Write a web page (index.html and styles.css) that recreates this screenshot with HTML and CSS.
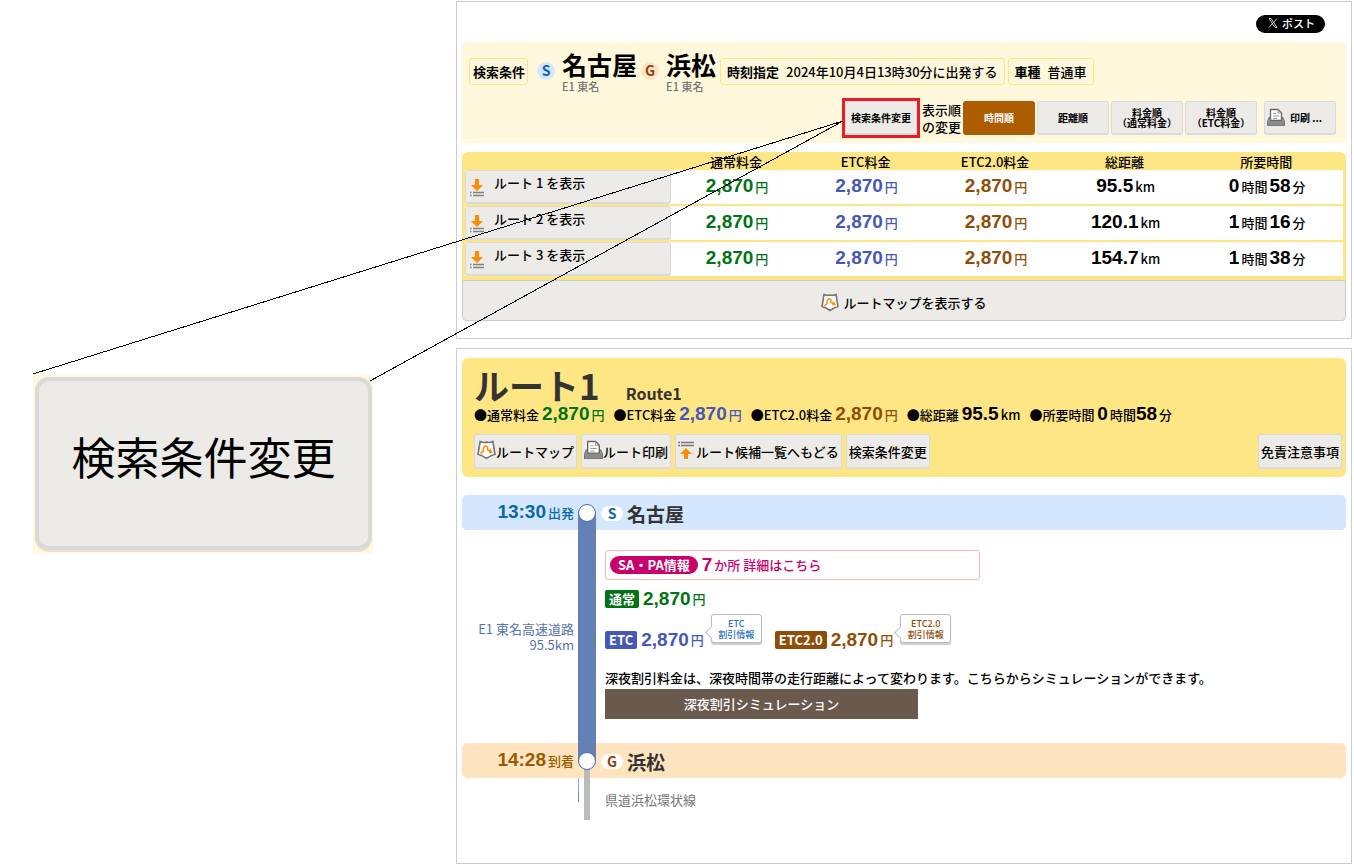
FILE: index.html
```html
<!DOCTYPE html>
<html lang="ja">
<head>
<meta charset="utf-8">
<title>ルート検索結果</title>
<link rel="stylesheet" href="styles.css">
</head>
<body>
<svg class="defs" aria-hidden="true">
  <symbol id="i-down" viewBox="0 0 14 18">
    <path d="M5 0h4v6h4L7 12 1 6h4z" fill="#ff8c00"/>
    <path d="M0 13.5h1.5M3 13.5h11M0 16.5h1.5M3 16.5h11" stroke="#808080" stroke-width="1.6"/>
  </symbol>
  <symbol id="i-up" viewBox="0 0 16 18">
    <path d="M0 1.5h2M3 1.5h13M0 4.500h2M3 4.500h13" stroke="#777" stroke-width="1.6"/>
    <path d="M6 18h4v-5h4L8 7l-6 6h4z" fill="#ff8c00"/>
  </symbol>
  <symbol id="i-map" viewBox="0 0 18 18">
    <path d="M3 1q3 1.500 6 .5 3 1 6-.5l2 12q-4 1-8 4-4-3-8-4z" fill="#fff" stroke="#777" stroke-width="1.6"/>
    <path d="M4 13q-.5-2 2-2.500V7q2-3 4-1v3l3 1" fill="none" stroke="#ff8c00" stroke-width="1.4"/>
    <path d="M12.500 7.500L15 11.500l-4 .5z" fill="#ff8c00"/>
  </symbol>
  <symbol id="i-print" viewBox="0 0 18 18">
    <path d="M2 9h14l1.500 4v4H.5v-4z" fill="#999" stroke="#707070"/>
    <path d="M3.500 1H11l3.500 3.500V12h-11z" fill="#fff" stroke="#666" stroke-width="1.3"/>
    <path d="M11 1v3.500h3.500M6 5h3M6 7.500h6M6 10h4" fill="none" stroke="#999"/>
    <path d="M1 13h16v4H1z" fill="#8a8a8a"/>
  </symbol>
</svg>

<main class="page">
  <aside class="callout"><button class="callout-btn" type="button">検索条件変更</button></aside>

  <div class="results">
    <section class="panel">
      <div class="share">
        <button class="post" type="button"><svg width="10" height="10" viewBox="0 0 10 10"><path d="M1 .5h2l6 9H7zM9 .5L1 9.500" fill="none" stroke="#ccc"/></svg>ポスト</button>
      </div>

      <div class="search">
        <div class="conditions">
          <span class="chip chip-label">検索条件</span>
          <span class="dot dot-s">S</span>
          <div class="place"><strong>名古屋</strong><small>E1 東名</small></div>
          <span class="dot dot-g">G</span>
          <div class="place"><strong>浜松</strong><small>E1 東名</small></div>
          <span class="chip chip-time"><b>時刻指定</b>2024年10月4日13時30分に出発する</span>
          <span class="chip"><b>車種</b>普通車</span>
        </div>
        <div class="sorting">
          <span class="marked"><button class="btn sort" type="button">検索条件変更</button></span>
          <span class="sort-label">表示順<br>の変更</span>
          <button class="btn sort active" type="button">時間順</button>
          <button class="btn sort" type="button">距離順</button>
          <button class="btn sort" type="button">料金順<br>（通常料金）</button>
          <button class="btn sort" type="button">料金順<br>（ETC料金）</button>
          <button class="btn sort print" type="button"><svg width="18" height="19"><use href="#i-print"/></svg>印刷 ...</button>
        </div>
      </div>

      <div class="routes">
        <table>
          <thead><tr><th class="c-name"></th><th>通常料金</th><th>ETC料金</th><th>ETC2.0料金</th><th>総距離</th><th class="c-time">所要時間</th></tr></thead>
          <tbody>
            <tr><td><button class="btn show" type="button"><svg width="14" height="18"><use href="#i-down"/></svg>ルート 1 を表示</button></td>
              <td class="green"><b>2,870</b>円</td><td class="blue"><b>2,870</b>円</td><td class="brown"><b>2,870</b>円</td><td><b>95.5</b>km</td><td><b>0</b>時間<b>58</b>分</td></tr>
            <tr><td><button class="btn show" type="button"><svg width="14" height="18"><use href="#i-down"/></svg>ルート 2 を表示</button></td>
              <td class="green"><b>2,870</b>円</td><td class="blue"><b>2,870</b>円</td><td class="brown"><b>2,870</b>円</td><td><b>120.1</b>km</td><td><b>1</b>時間<b>16</b>分</td></tr>
            <tr><td><button class="btn show" type="button"><svg width="14" height="18"><use href="#i-down"/></svg>ルート 3 を表示</button></td>
              <td class="green"><b>2,870</b>円</td><td class="blue"><b>2,870</b>円</td><td class="brown"><b>2,870</b>円</td><td><b>154.7</b>km</td><td><b>1</b>時間<b>38</b>分</td></tr>
          </tbody>
        </table>
      </div>
      <button class="open-map" type="button"><svg width="18" height="19"><use href="#i-map"/></svg>ルートマップを表示する</button>
    </section>

    <section class="panel detail">
      <header class="route-head">
        <h1>ルート1<small>Route1</small></h1>
        <ul class="stats">
          <li>●通常料金 <span class="green"><b>2,870</b>円</span></li>
          <li>●ETC料金 <span class="blue"><b>2,870</b>円</span></li>
          <li>●ETC2.0料金 <span class="brown"><b>2,870</b>円</span></li>
          <li>●総距離 <span><b>95.5</b>km</span></li>
          <li>●所要時間 <span><b>0</b>時間<b>58</b>分</span></li>
        </ul>
        <div class="actions">
          <button class="btn" type="button"><svg width="19" height="20"><use href="#i-map"/></svg>ルートマップ</button>
          <button class="btn" type="button"><svg width="19" height="20"><use href="#i-print"/></svg>ルート印刷</button>
          <button class="btn up" type="button"><svg width="16" height="18"><use href="#i-up"/></svg>ルート候補一覧へもどる</button>
          <button class="btn" type="button">検索条件変更</button>
          <button class="btn last" type="button">免責注意事項</button>
        </div>
      </header>

      <div class="timeline">
        <div class="stop depart">
          <div class="when"><b>13:30</b>出発</div>
          <div class="rail rail-start"><span class="node"></span></div>
          <h2><span class="badge">S</span>名古屋</h2>
        </div>
        <div class="leg">
          <div class="road">E1 東名高速道路<br>95.5km</div>
          <div class="rail rail-full"></div>
          <div class="leg-body">
            <a class="sapa" href="#"><span class="pill">SA・PA情報</span><b>7</b>か所 詳細はこちら</a>
            <div class="fare green"><span class="tag">通常</span><b>2,870</b>円</div>
            <div class="fares">
              <div class="fare blue"><span class="tag">ETC</span><b>2,870</b>円</div>
              <button class="bubble b-etc" type="button">ETC<br>割引情報</button>
              <div class="fare brown"><span class="tag">ETC2.0</span><b>2,870</b>円</div>
              <button class="bubble b-etc2" type="button">ETC2.0<br>割引情報</button>
            </div>
            <p class="note">深夜割引料金は、深夜時間帯の走行距離によって変わります。こちらからシミュレーションができます。</p>
            <button class="simulate" type="button">深夜割引シミュレーション</button>
          </div>
        </div>
        <div class="stop arrive">
          <div class="when"><b>14:28</b>到着</div>
          <div class="rail rail-end"><span class="node"></span></div>
          <h2><span class="badge">G</span>浜松</h2>
        </div>
        <div class="leg after">
          <div></div>
          <div class="rail rail-local"></div>
          <div class="local">県道浜松環状線</div>
        </div>
      </div>
    </section>
  </div>

  <svg class="leader" width="844" height="384" aria-hidden="true"><path d="M33 374L843 121M370 381L843 121" stroke="#000" stroke-width="1" shape-rendering="crispEdges"/></svg>
</main>
</body>
</html>
```
FILE: styles.css
```css
* { box-sizing: border-box; }
body {
  margin: 0;
  background: #fff;
  color: #000;
  font: 500 13px/18px "Noto Sans CJK JP", sans-serif;
}
button { font: inherit; color: inherit; margin: 0; padding: 0; cursor: pointer; white-space: nowrap; }
svg { flex: none; }
.defs { position: absolute; width: 0; height: 0; }

.page {
  position: relative;
  display: grid;
  grid-template-columns: 456px minmax(0, 1fr);
  min-height: 100vh;
  padding: 1px 2px 0 0;
}
.leader { position: absolute; left: 0; top: 0; pointer-events: none; }

.callout {
  align-self: start;
  margin: 374px 83px 0 33px;
  padding: 2px 1px 3px 2px;
  background: #fff8dc;
}
.callout-btn {
  display: block;
  width: 100%;
  height: 173px;
  padding-bottom: 16px;
  border: 4px solid #dadada;
  border-radius: 14px;
  background: #ecebe7;
  box-shadow: 0 2px 0 #e9e1c8;
  font-size: 44px;
  font-weight: 400;
}

.results { display: flex; flex-direction: column; gap: 9px; }
.panel { border: 1px solid #ccc; padding: 0 5px 17px; }
.detail { flex: 1; padding-top: 9px; }

.btn {
  display: flex;
  align-items: center;
  justify-content: center;
  border: 1px solid #dadada;
  border-bottom-width: 2px;
  border-radius: 3px;
  background: #ecebe7;
}
.green { color: #007314; }
.blue { color: #4557b8; }
.brown { color: #8f4d08; }

.share { display: flex; justify-content: flex-end; padding: 13px 21px 9px 0; }
.post {
  display: flex;
  align-items: center;
  gap: 4px;
  height: 18px;
  padding: 0 10px 2px 12px;
  border: 0;
  border-radius: 9px;
  background: #000;
  color: #fff;
  font-size: 11px;
}

.search { padding: 9px 10px 6px 7px; border-radius: 5px; background: #fff8dc; }
.conditions { display: flex; align-items: flex-start; height: 48px; }
.chip {
  height: 27px;
  margin-top: 7px;
  padding: 4px 6px 0;
  border: 1px solid #ffe685;
  border-radius: 3px;
  line-height: 18px;
  white-space: nowrap;
}
.chip b { margin-right: 7px; }
.chip-label { padding: 4px 2px 0 3px; font-weight: 700; }
.chip-time { margin: 7px 3px 0 4px; }
.dot {
  width: 18px;
  height: 18px;
  margin: 11px 7px 0 9px;
  border-radius: 50%;
  font-size: 14px;
  font-weight: 700;
  line-height: 17px;
  text-align: center;
}
.dot-s { background: #d4e7ff; color: #1465a5; }
.dot-g { margin-left: 4px; background: #ffe4c0; color: #8f4310; }
.place strong { display: block; font-size: 25px; line-height: 27px; }
.place small { display: block; color: #777; font-size: 11px; line-height: 16px; }
.sorting { display: flex; align-items: center; justify-content: flex-end; gap: 2px; height: 38px; }
.sort { width: 72px; height: 34px; font-size: 10px; font-weight: 700; line-height: 10px; }
.marked { border: 3px solid #ed1c24; }
.sort-label { line-height: 17px; }
.active { border-color: #ad5c00; background: #ad5c00; color: #fff; }
.print { justify-content: flex-start; gap: 5px; margin-left: 5px; padding-left: 2px; }

.routes { margin-top: 9px; padding: 0 3px 4px; border-radius: 6px 6px 0 0; background: #ffe685; }
table { width: 100%; border-spacing: 0; table-layout: fixed; text-align: center; }
th { height: 18px; padding: 1px 0 0; font-weight: 500; line-height: 17px; }
.c-name { width: 23.5%; }
.c-time { width: 17.5%; }
td { height: 36px; padding: 0; border-bottom: 2px solid #ffe685; background: #fff; line-height: 34px; white-space: nowrap; }
tbody tr:last-child td { height: 34px; border-bottom: 0; }
b { font-family: inherit; }
td b, .stats b, .fare b, .sapa b, .when b {
  margin: 0 2px;
  font: 700 19px/20px "Liberation Sans", Arial, sans-serif;
}
.show { justify-content: flex-start; gap: 10px; width: 100%; height: 34px; padding: 0 0 7px 4px; }
.show svg { margin-top: 9px; }
.open-map {
  display: flex;
  align-items: center;
  justify-content: center;
  gap: 4px;
  width: 100%;
  height: 41px;
  padding-top: 4px;
  border: 1px solid #ccc;
  border-radius: 0 0 4px 4px;
  background: #ecebe7;
}

.route-head { padding: 8px 4px 8px 12px; border-radius: 6px; background: #ffe685; }
h1 { display: flex; align-items: baseline; gap: 26px; height: 38px; margin: 0; color: #333; font-size: 35px; line-height: 38px; }
h1 small { font-size: 16px; line-height: 20px; }
.stats { display: flex; gap: 9px; height: 30px; margin: 0; padding: 0; list-style: none; line-height: 22px; white-space: nowrap; }
.stats b { margin-left: 0; }
.actions { display: flex; gap: 4px; }
.actions .btn { height: 35px; padding: 2px 2px 0; }
.actions .btn svg { margin-top: -5px; }
.actions .up { gap: 2px; }
.actions .last { margin-left: auto; }

.timeline { margin-top: 18px; }
.stop, .leg { display: grid; grid-template-columns: 112px 18px minmax(0, 1fr); column-gap: 4px; }
.stop { height: 35px; border-radius: 5px; }
.depart { background: #d4e7ff; color: #0b68aa; }
.arrive { background: #ffe4c0; color: #9a5b00; }
.when { text-align: right; line-height: 35px; }
.rail { display: flex; align-items: center; justify-content: center; }
.rail-start { background: linear-gradient(transparent 50%, #6481b6 50%); }
.rail-full { background: #6481b6; }
.rail-end { background: linear-gradient(90deg, transparent 6px, #bbb 6px, #bbb 12px, transparent 12px) 0 100% / 100% 50% no-repeat, linear-gradient(#6481b6 50%, transparent 50%); }
.rail-local { height: 42px; background: linear-gradient(90deg, transparent 6px, #bbb 6px, #bbb 12px, transparent 12px), linear-gradient(#a5b5d6, #6481b6) 0 0 / 1px 24px no-repeat; }
.node { flex: none; width: 18px; height: 18px; border: 1px solid #4b6aa5; border-radius: 50%; background: #fff; }
h2 { display: flex; align-items: center; gap: 4px; margin: 0; padding: 2px 0 0 1px; color: #333; font-size: 19px; line-height: 24px; }
.badge { width: 22px; height: 15px; border-radius: 8px; background: #fff; color: #1465a5; font-size: 14px; line-height: 14px; text-align: center; }
.arrive .badge { color: #8f4310; }
.road { padding-top: 91px; color: #5874ad; font-weight: 400; line-height: 16px; text-align: right; }
.leg-body { height: 213px; padding: 20px 0 0 5px; }
.sapa {
  display: flex;
  align-items: center;
  width: 375px;
  height: 30px;
  padding-left: 4px;
  border: 1px solid #ffb3b8;
  border-radius: 3px;
  color: #c9006b;
  text-decoration: none;
}
.pill { height: 18px; margin-right: 2px; padding: 0 8px; border-radius: 9px; background: #c9006b; color: #fff; font-weight: 700; }
.fare { display: flex; align-items: center; margin-top: 8px; line-height: 22px; }
.tag { height: 18px; margin-right: 2px; padding: 0 4px; border-radius: 2px; background: #007314; color: #fff; font-weight: 700; line-height: 18px; }
.blue .tag { background: #4557b8; }
.brown .tag { background: #8f4d08; }
.fares { display: flex; align-items: flex-start; height: 51px; padding-top: 3px; }
.fares .fare { margin-top: 16px; }
.bubble {
  position: relative;
  width: 51px;
  height: 29px;
  margin: 1px 13px 0 7px;
  border: 1px solid #bbb;
  border-radius: 3px;
  background: #fff;
  box-shadow: 0 2px 1px #ccc;
  font-size: 9px;
  line-height: 11px;
}
.bubble::before {
  content: "";
  position: absolute;
  left: -5px;
  top: 13px;
  width: 8px;
  height: 8px;
  border: 1px solid #bbb;
  border-width: 0 0 1px 1px;
  background: #fff;
  transform: rotate(45deg);
}
.b-etc { color: #2b72bd; }
.b-etc2 { color: #8f4d08; }
.note { margin: 8px 0 2px; line-height: 18px; }
.simulate { display: block; width: 313px; height: 30px; border: 0; background: #6a5a4e; color: #fff; }
.local { padding: 13px 0 0 5px; color: #777; font-weight: 400; }
```
